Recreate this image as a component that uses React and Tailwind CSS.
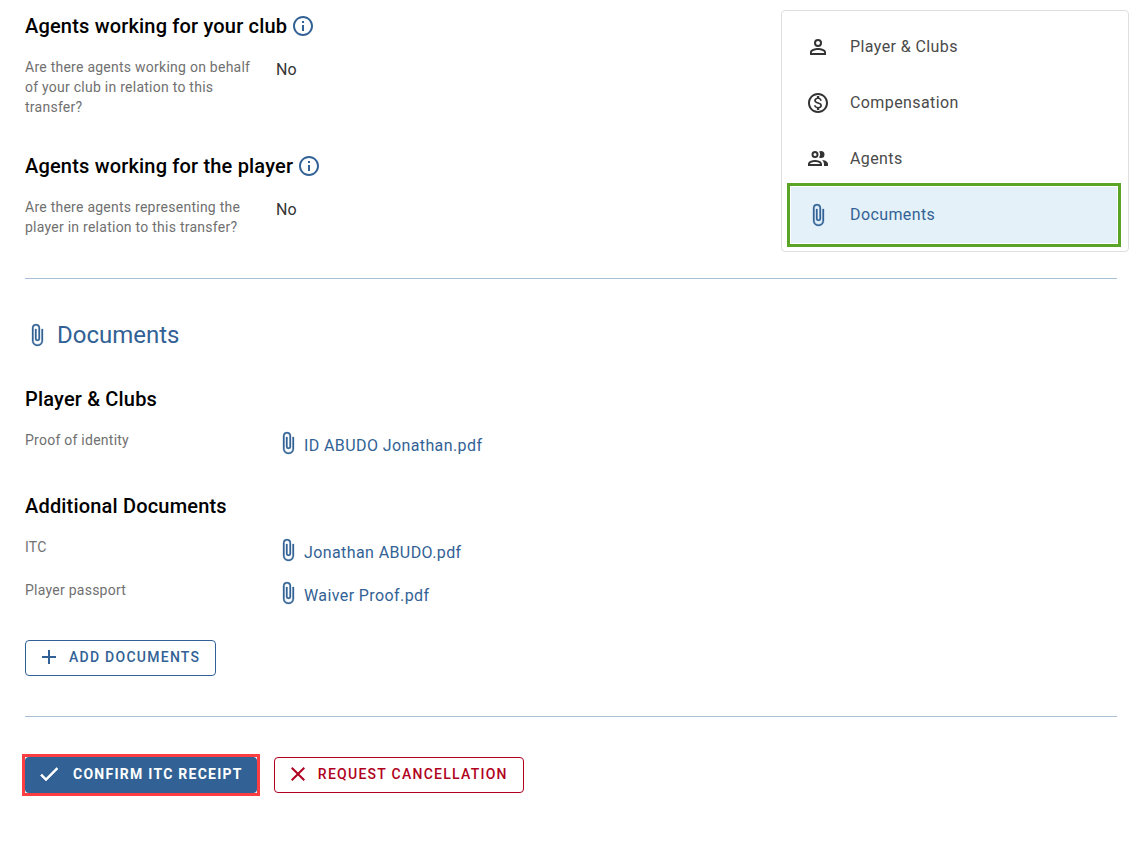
import { MdAdd, MdClose, MdInfoOutline, MdOutlineMonetizationOn } from 'react-icons/md'

function AccountIcon({ className }) {
  return (
    <svg viewBox="0 0 24 24" fill="currentColor" className={className} aria-hidden="true">
      <path d="M12,4A4,4 0 0,1 16,8A4,4 0 0,1 12,12A4,4 0 0,1 8,8A4,4 0 0,1 12,4M12,6A2,2 0 0,0 10,8A2,2 0 0,0 12,10A2,2 0 0,0 14,8A2,2 0 0,0 12,6M12,13C14.67,13 20,14.33 20,17V20H4V17C4,14.33 9.33,13 12,13M12,14.9C9.03,14.9 5.9,16.36 5.9,17V18.1H18.1V17C18.1,16.36 14.97,14.9 12,14.9Z" />
    </svg>
  )
}

function AccountsIcon({ className }) {
  return (
    <svg viewBox="0 0 24 24" fill="currentColor" className={className} aria-hidden="true">
      <path d="M13.07 10.41A5 5 0 0 0 13.07 4.59A3.39 3.39 0 0 1 15 4A3.5 3.5 0 0 1 15 11A3.39 3.39 0 0 1 13.07 10.41M5.5 7.5A3.5 3.5 0 1 1 9 11A3.5 3.5 0 0 1 5.5 7.5M7.5 7.5A1.5 1.5 0 1 0 9 6A1.5 1.5 0 0 0 7.5 7.5M16 17V19H2V17S2 13 9 13 16 17 16 17M14 17C13.86 16.22 12.67 15 9 15S4.07 16.31 4 17M15.95 13A5.32 5.32 0 0 1 18 17V19H22V17S22 13.37 15.94 13Z" />
    </svg>
  )
}

function ClipIcon({ className }) {
  return (
    <svg viewBox="0 0 24 24" fill="currentColor" stroke="currentColor" strokeWidth="0.3" className={className} aria-hidden="true">
      <path d="M16.5,6V17.5A4,4 0 0,1 12.5,21.5A4,4 0 0,1 8.5,17.5V5A2.5,2.5 0 0,1 11,2.5A2.5,2.5 0 0,1 13.5,5V15.5A1,1 0 0,1 12.5,16.5A1,1 0 0,1 11.5,15.5V6H10V15.5A2.5,2.5 0 0,0 12.5,18A2.5,2.5 0 0,0 15,15.5V5A4,4 0 0,0 11,1A4,4 0 0,0 7,5V17.5A5.5,5.5 0 0,0 12.5,23A5.5,5.5 0 0,0 18,17.5V6H16.5Z" />
    </svg>
  )
}

function CheckIcon({ className }) {
  return (
    <svg viewBox="0 0 24 24" fill="currentColor" stroke="currentColor" strokeWidth="0.6" className={className} aria-hidden="true">
      <path d="M21,7L9,19L3.5,13.5L4.91,12.09L9,16.17L19.59,5.59L21,7Z" />
    </svg>
  )
}

const navItems = [
  { label: 'Player & Clubs', icon: AccountIcon },
  { label: 'Compensation', icon: MdOutlineMonetizationOn },
  { label: 'Agents', icon: AccountsIcon },
  { label: 'Documents', icon: ClipIcon, active: true },
]

function SectionTitle({ children, info }) {
  return (
    <div className="flex h-8 items-center gap-1">
      <h3 className="text-xl font-medium tracking-[0.009em] text-black">{children}</h3>
      {info && (
        <button type="button" aria-label={`About: ${children}`} className="text-[#326295]">
          <MdInfoOutline className="size-6" />
        </button>
      )}
    </div>
  )
}

function Field({ label, children }) {
  return (
    <div className="flex items-start">
      <dt className="w-[251px] shrink-0 pr-4 text-sm leading-5 tracking-[0.018em] text-[#707070]">{label}</dt>
      <dd className="text-base leading-[26px] text-[#333333]">{children}</dd>
    </div>
  )
}

function FileLink({ name }) {
  return (
    <a href="#file" className="flex items-center gap-1 leading-6 tracking-wide text-[#326295]">
      <ClipIcon className="mb-0.5 size-6" />
      <span className="pt-1">{name}</span>
    </a>
  )
}

function SideNav() {
  return (
    <nav className="w-[348px] shrink-0 self-start rounded border border-[#dfdfdf] py-2 pr-[11px] pl-[9px]">
      {navItems.map(({ label, icon: Icon, active }) => (
        <a
          key={label}
          href="#section"
          aria-current={active ? 'true' : undefined}
          className={`flex h-14 items-center gap-5 px-[15px] tracking-wide ${
            active ? 'bg-[#e4f1f9] text-[#326295] outline-3 outline-offset-1 outline-[#5ba526]' : 'text-[#4a4a4a]'
          }`}
        >
          <Icon className={`size-6 ${active ? '' : 'text-[#333333]'}`} />
          {label}
        </a>
      ))}
    </nav>
  )
}

function OutlinedButton({ icon: Icon, className, children }) {
  return (
    <button
      type="button"
      className={`flex h-9 items-center gap-2 rounded border pr-[15px] pb-0.5 pl-[11px] text-sm font-medium tracking-[0.09em] ${className}`}
    >
      <Icon className="size-6" />
      {children}
    </button>
  )
}

export default function App() {
  return (
    <main className="min-h-screen bg-white pt-2.5 pb-12 pl-[25px] font-[Roboto,sans-serif]">
      <div className="flex justify-between pr-3.5">
        <div>
          <section>
            <SectionTitle info>Agents working for your club</SectionTitle>
            <dl className="mt-[15px]">
              <Field label="Are there agents working on behalf of your club in relation to this transfer?">No</Field>
            </dl>
          </section>
          <section className="mt-[33px]">
            <SectionTitle info>Agents working for the player</SectionTitle>
            <dl className="mt-[15px]">
              <Field label="Are there agents representing the player in relation to this transfer?">No</Field>
            </dl>
          </section>
        </div>
        <SideNav />
      </div>

      <div className="pr-[26px]">
        <hr className="mt-[26px] border-[#a9bfd5]" />
        <h2 className="mt-10 flex h-8 items-center gap-2 text-2xl text-[#326295]">
          <ClipIcon className="size-6" />
          Documents
        </h2>

        <section className="mt-8">
          <SectionTitle>Player & Clubs</SectionTitle>
          <dl className="mt-[15px]">
            <Field label="Proof of identity">
              <FileLink name="ID ABUDO Jonathan.pdf" />
            </Field>
          </dl>
        </section>

        <section className="mt-8">
          <SectionTitle>Additional Documents</SectionTitle>
          <dl className="mt-[15px] flex flex-col gap-[15px]">
            <Field label="ITC">
              <FileLink name="Jonathan ABUDO.pdf" />
            </Field>
            <Field label="Player passport">
              <FileLink name="Waiver Proof.pdf" />
            </Field>
          </dl>
        </section>

        <div className="mt-8 flex">
          <OutlinedButton icon={MdAdd} className="border-[#326295] text-[#326295]">
            ADD DOCUMENTS
          </OutlinedButton>
        </div>

        <hr className="mt-10 border-[#a9bfd5]" />

        <div className="mt-10 flex gap-[17px]">
          <div className="outline-3 outline-[#fb3e42]">
            <button
              type="button"
              className="flex h-9 items-center gap-3 rounded bg-[#326295] pr-3.5 pb-0.5 pl-3 text-sm font-bold tracking-[0.09em] text-white"
            >
              <CheckIcon className="size-6" />
              CONFIRM ITC RECEIPT
            </button>
          </div>
          <OutlinedButton icon={MdClose} className="border-[#b00020] text-[#b00020]">
            REQUEST CANCELLATION
          </OutlinedButton>
        </div>
      </div>
    </main>
  )
}
